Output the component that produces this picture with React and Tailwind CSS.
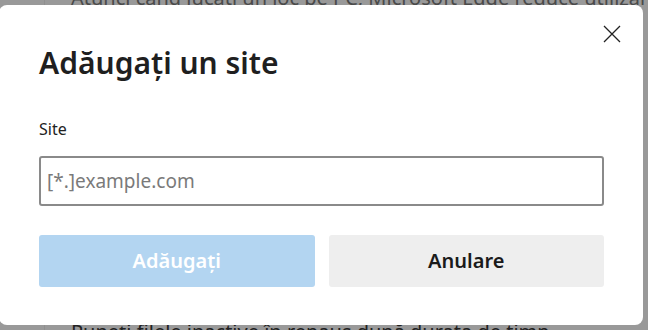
export default function App() {
  return (
    <div className="relative w-[648px] h-[330px] overflow-hidden bg-[#999999]" style={{ fontFamily: '"Noto Sans", "Open Sans", sans-serif' }}>
      {/* pagina din spate, sub overlay */}
      <div className="flex h-full">
        <div className="w-[45px] shrink-0 border-r border-[#8f8f8f]" />
        <div className="flex-1 min-w-0 flex flex-col justify-between pl-[26px] text-[#4a4a4a] text-[20px] leading-none">
          <div className="-mt-[12px] whitespace-nowrap">Atunci când jucați un joc pe PC, Microsoft Edge reduce utilizarea resurselor</div>
          <div className="-mb-[12px] whitespace-nowrap text-[#222]">Puneți filele inactive în repaus după durata de timp</div>
        </div>
      </div>

      {/* dialog */}
      <div className="absolute left-[-1px] top-[5px] w-[644px] h-[320px] bg-white rounded-[8px] px-[40px] pt-[39px]">
        <button className="absolute right-[19px] top-[17px] w-[24px] h-[24px] flex items-center justify-center text-[#222]">
          <svg width="20" height="20" viewBox="0 0 20 20" fill="none" stroke="currentColor" strokeWidth="1.3">
            <path d="M2 2 L18 18 M18 2 L2 18" />
          </svg>
        </button>
        <h1 className="text-[30px] font-semibold leading-[38px] text-[#1f1f1f]">Adăugați un site</h1>
        <div className="mt-[37px] text-[16px] leading-[20px] text-[#222]">Site</div>
        <input
          className="mt-[17px] w-[565px] h-[50px] border-2 border-[#8a8a8a] rounded-[3px] px-[6px] text-[19px] outline-none placeholder:text-[#7a7a7a]"
          placeholder="[*.]example.com"
        />
        <div className="mt-[29px] flex gap-[14px] w-[565px]">
          <button className="flex-1 h-[52px] rounded-[3px] bg-[#b3d5f1] text-white text-[20px] font-semibold">Adăugați</button>
          <button className="flex-1 h-[52px] rounded-[3px] bg-[#eeeeee] text-[#1a1a1a] text-[20px] font-semibold">Anulare</button>
        </div>
      </div>
    </div>
  )
}
